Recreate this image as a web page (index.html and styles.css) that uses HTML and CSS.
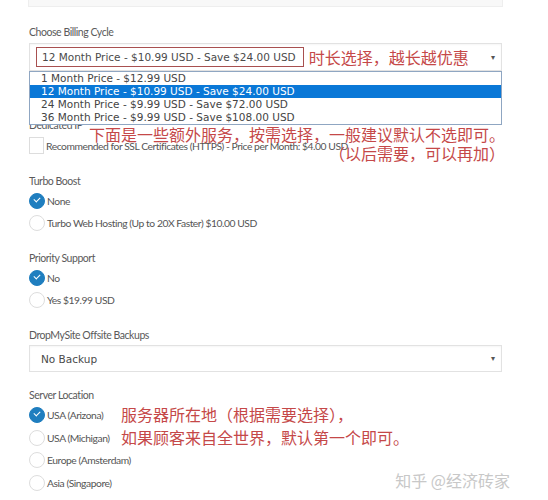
FILE: index.html
```html
<!DOCTYPE html>
<html lang="en">
<head>
  <meta charset="UTF-8">
  <title>Configure</title>
  <link rel="stylesheet" href="styles.css">
</head>
<body>
  <div class="page">
    <div class="top-box"></div>

    <!-- Billing cycle -->
    <div class="field-label first">Choose Billing Cycle</div>
    <div class="select-wrap">
      <div class="select">
        <span class="picked">12 Month Price - $10.99 USD - Save $24.00 USD</span>
        <span class="note note-inline">时长选择，越长越优惠</span>
        <span class="arrow">▾</span>
      </div>
      <ul class="options">
        <li>1 Month Price - $12.99 USD</li>
        <li class="active">12 Month Price - $10.99 USD - Save $24.00 USD</li>
        <li>24 Month Price - $9.99 USD - Save $72.00 USD</li>
        <li>36 Month Price - $9.99 USD - Save $108.00 USD</li>
      </ul>
    </div>

    <!-- Dedicated IP -->
    <div class="group group-ip">
      <div class="field-label">Dedicated IP</div>
      <label class="option">
        <span class="checkbox"></span>
        <span>Recommended for SSL Certificates (HTTPS) - Price per Month: $4.00 USD</span>
      </label>
      <div class="note note-extra">下面是一些额外服务，按需选择，一般建议默认不选即可。<br>（以后需要，可以再加）</div>
    </div>

    <div class="group">
      <div class="field-label">Turbo Boost</div>
      <label class="option"><span class="radio checked"></span><span>None</span></label>
      <label class="option"><span class="radio"></span><span>Turbo Web Hosting (Up to 20X Faster) $10.00 USD</span></label>
    </div>

    <div class="group">
      <div class="field-label">Priority Support</div>
      <label class="option"><span class="radio checked"></span><span>No</span></label>
      <label class="option"><span class="radio"></span><span>Yes $19.99 USD</span></label>
    </div>

    <div class="group">
      <div class="field-label">DropMySite Offsite Backups</div>
      <div class="select select-small">
        <span class="plain">No Backup</span>
        <span class="arrow">▾</span>
      </div>
    </div>

    <div class="group group-location">
      <div class="field-label">Server Location</div>
      <label class="option"><span class="radio checked"></span><span>USA (Arizona)</span></label>
      <label class="option"><span class="radio"></span><span>USA (Michigan)</span></label>
      <label class="option"><span class="radio"></span><span>Europe (Amsterdam)</span></label>
      <label class="option"><span class="radio"></span><span>Asia (Singapore)</span></label>
      <div class="note note-location">服务器所在地（根据需要选择），<br>如果顾客来自全世界，默认第一个即可。</div>
    </div>

    <div class="watermark">知乎 @经济砖家</div>
  </div>
</body>
</html>
```

FILE: styles.css
```css
body {
  margin: 0;
  background: #fff;
  font-family: Lato, "Open Sans", sans-serif;
  color: #555;
}
.page {
  position: relative;
  height: 500px;
  padding: 0 46px 0 29px;
  overflow: hidden;
}
.top-box {
  height: 6px;
  margin-left: -1px;
  margin-right: -1px;
  background: #f8f8f8;
  border: 1px solid #eee;
  border-top: none;
}
.field-label {
  font-size: 10.5px;
  line-height: 14px;
  letter-spacing: -0.45px;
  color: #5a5a5a;
}
.field-label.first {
  margin-top: 18px;
}
.select-wrap {
  position: relative;
  margin-top: 4px;
}
.select {
  display: flex;
  align-items: center;
  height: 26px;
  border: 1px solid #e2e2e2;
  box-shadow: inset 0 1px 2px rgba(0, 0, 0, 0.04);
  padding-left: 6px;
  font-family: "DejaVu Sans", Verdana, sans-serif;
  font-size: 10.5px;
  color: #4a4a4a;
}
.picked {
  border: 1px solid #a85050;
  padding: 3px 7px 3px 5px;
  line-height: 12px;
}
.plain {
  padding-left: 5px;
}
.arrow {
  margin-left: auto;
  margin-right: 6px;
  font-size: 8px;
  color: #555;
}
.options {
  position: absolute;
  top: 100%;
  left: 0;
  right: 0;
  margin: 0;
  padding: 0;
  list-style: none;
  background: #fff;
  border: 1px solid #8fa6c2;
  font-family: "DejaVu Sans", Verdana, sans-serif;
  font-size: 10.5px;
  color: #444;
  z-index: 2;
}
.options li {
  height: 13px;
  line-height: 13px;
  padding-left: 11px;
}
.options li.active {
  background: #0a78d7;
  color: #fff;
}
.note {
  font-family: "Noto Sans CJK SC", sans-serif;
  color: #c54848;
  z-index: 3;
}
.note-inline {
  margin-left: 5px;
  font-size: 16px;
  line-height: 20px;
}
.group {
  position: relative;
  margin-top: 20px;
}
.group-ip {
  margin-top: 47px;
}
.group-ip .option {
  margin-top: 8px;
  height: 17px;
}
.option {
  display: flex;
  align-items: center;
  gap: 2px;
  height: 16px;
  margin-top: 6px;
  font-size: 10.3px;
  letter-spacing: -0.45px;
  color: #555;
}
.field-label + .option {
  margin-top: 5px;
}
.checkbox {
  width: 15px;
  height: 17px;
  border: 1px solid #ddd;
  box-sizing: border-box;
  flex: none;
}
.radio {
  position: relative;
  width: 16px;
  height: 16px;
  border: 1px solid #ddd;
  border-radius: 50%;
  box-sizing: border-box;
  flex: none;
}
.radio.checked {
  background: #1f7ebf;
  border-color: #1f7ebf;
}
.radio.checked::after {
  content: "";
  position: absolute;
  left: 4px;
  top: 3px;
  width: 5px;
  height: 3px;
  border-left: 1.6px solid #fff;
  border-bottom: 1.6px solid #fff;
  transform: rotate(-45deg);
}
.note-extra {
  position: absolute;
  top: 7px;
  right: -3px;
  text-align: right;
  font-size: 16px;
  line-height: 19px;
}
.select-small {
  margin-top: 3px;
  height: 25px;
}
.group-location {
  margin-top: 16px;
}
.group-location .option {
  margin-top: 6.7px;
}
.group-location .field-label + .option {
  margin-top: 5px;
}
.note-location {
  position: absolute;
  left: 92px;
  top: 15px;
  font-size: 16px;
  line-height: 23px;
}
.watermark {
  position: absolute;
  right: 38px;
  bottom: 8px;
  font-family: "Noto Sans CJK SC", sans-serif;
  font-size: 16px;
  color: #c8c8c8;
}
```
